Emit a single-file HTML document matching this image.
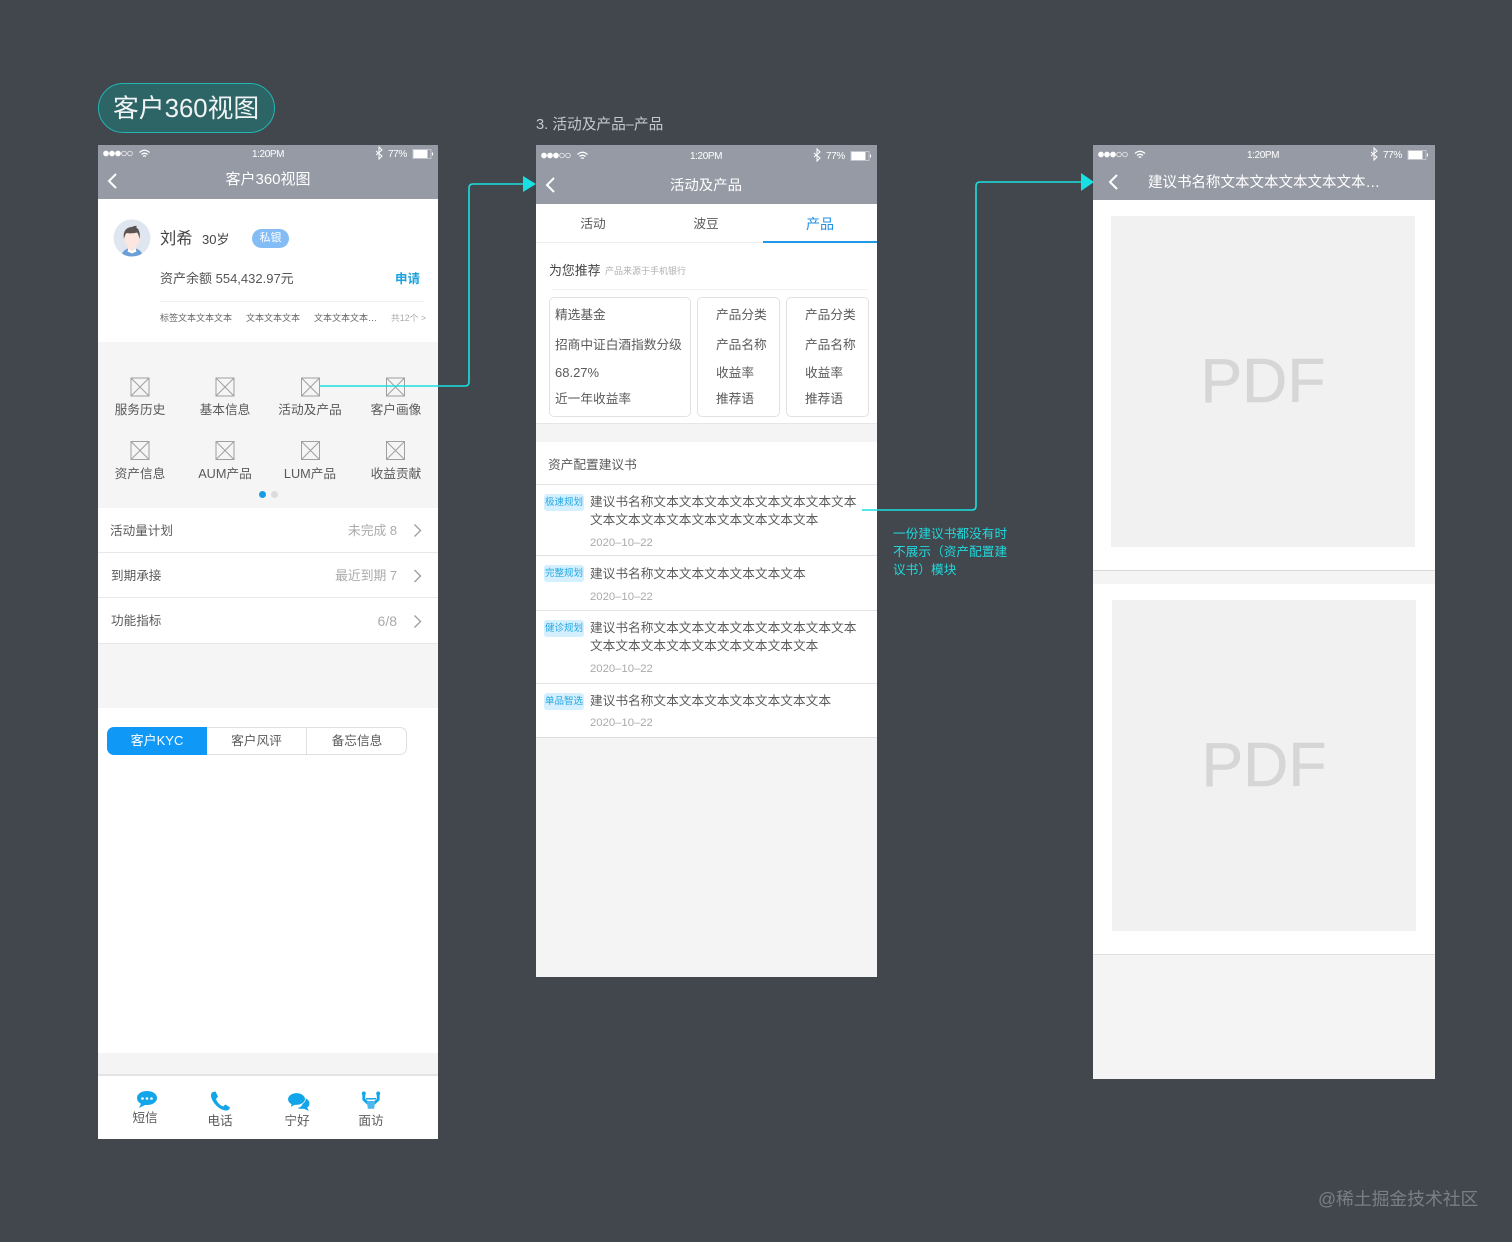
<!DOCTYPE html>
<html lang="zh"><head><meta charset="utf-8"><title>客户360视图</title>
<style>
html,body{margin:0;padding:0}
body{width:1512px;height:1242px;background:#42474d;position:relative;overflow:hidden;font-family:"Liberation Sans","Noto Sans CJK SC",sans-serif;color:#5a5a5a}
.b{position:absolute}
.t{position:absolute;white-space:nowrap;line-height:20px;height:20px;margin-top:1px}
.c{transform:translateX(-50%)}
.r{transform:translateX(-100%)}
.w{color:#fff}
.f12{font-size:12px}.f13{font-size:12.700px}.f14{font-size:14px}.f15{font-size:15px}.f10{font-size:10px}
.g{color:#aaa}
.tag{position:absolute;left:544px;width:40px;height:17px;line-height:17px;background:#d4effd;border-radius:3px;color:#25a7e4;font-size:9.500px;text-align:center;white-space:nowrap;margin-top:1px}
.card{position:absolute;top:297px;height:120px;border:1px solid #e2e2e2;border-radius:5px;box-sizing:border-box;background:#fff}
svg{position:absolute;overflow:visible}
</style></head><body>

<!-- Title pill -->
<div class="b" style="left:98px;top:83px;width:177px;height:50px;box-sizing:border-box;border:1.500px solid #22b6b2;border-radius:25px;background:#2d6466"></div>
<div class="t w" style="left:113px;top:93px;font-size:25.800px;line-height:30px;height:30px;color:#f0f4f4">客户360视图</div>
<div class="t" style="left:536px;top:114px;font-size:14.700px;color:#c6c9cc">3. 活动及产品–产品</div>

<!-- Phone 1 -->
<div class="b" style="left:98px;top:145px;width:340px;height:994px;background:#fff"></div>
<div class="b" style="left:98px;top:145px;width:340px;height:54px;background:#969aa5"></div>
<div class="b" style="left:98px;top:342px;width:340px;height:166px;background:#f5f5f6"></div>
<div class="b" style="left:98px;top:552px;width:340px;height:1px;background:#e8e8e8"></div>
<div class="b" style="left:98px;top:597px;width:340px;height:1px;background:#e8e8e8"></div>
<div class="b" style="left:98px;top:643px;width:340px;height:65px;background:#f5f5f6;border-top:1px solid #e6e6e6;box-sizing:border-box"></div>
<div class="b" style="left:98px;top:1053px;width:340px;height:23px;background:#f4f4f5;border-bottom:2px solid #e4e4e6;box-sizing:border-box"></div>
<div class="b" style="left:160px;top:301px;width:264px;height:1px;background:#f0f0f0"></div>

<div class="t w f10" style="left:252px;top:144px;letter-spacing:-.4px">1:20PM</div>
<div class="t w f10" style="left:388px;top:144px;letter-spacing:-.4px">77%</div>
<div class="t w c f15" style="left:268px;top:169px">客户360视图</div>

<!-- avatar -->
<svg style="left:113px;top:219px" width="38" height="38" viewBox="0 0 38 38">
<defs><clipPath id="av"><circle cx="19" cy="19" r="18.500"/></clipPath></defs>
<circle cx="19" cy="19" r="18.500" fill="#dfe6f0"/>
<g clip-path="url(#av)">
<path d="M8 38c1-6 5-9 11-9s10 3 11 9z" fill="#6a9fd6"/>
<path d="M15 27h8v3l-4 3-4-3z" fill="#fbe6de"/>
<path d="M15.500 29.500l3.500 3 3.500-3 1 3-4.500 2-4.500-2z" fill="#fff"/>
<ellipse cx="19" cy="20" rx="7.500" ry="8.500" fill="#fce6de"/>
<path d="M11 20c-1.500-7.500 2.500-12 8-12 1.500-1 3.500-1.200 5-1-.5.500-.8 1-.8 1.500 3 1.500 4.300 6 3.300 11.500-.5-3-1.500-5.500-2.500-6.500-3 1-8 1-10.500.500-1 1-2 3.500-2.500 6z" fill="#5a5554"/>
</g></svg>
<div class="t" style="left:160px;top:228px;font-size:16.300px;color:#444">刘希</div>
<div class="t" style="left:202px;top:229px;font-size:13px;color:#444">30岁</div>
<div class="b w" style="left:252px;top:229px;width:37px;height:19px;line-height:19px;border-radius:10px;background:#84bdf5;text-align:center;font-size:11px">私银</div>
<div class="t f13" style="left:160px;top:268px;font-size:13px;color:#555">资产余额 554,432.97元</div>
<div class="t" style="left:395px;top:268px;color:#1ea3de;font-weight:bold;font-size:12.500px">申请</div>
<div class="t" style="left:160px;top:307px;font-size:9px;color:#666">标签文本文本文本</div>
<div class="t" style="left:246px;top:307px;font-size:9px;color:#666">文本文本文本</div>
<div class="t" style="left:314px;top:307px;font-size:9px;color:#666">文本文本文本…</div>
<div class="t" style="left:391px;top:307px;font-size:8.800px;color:#aaa">共12个 &gt;</div>

<!-- icon grid -->
<svg style="left:0;top:0" width="1512" height="1242" fill="none" stroke="#a0a0a0" stroke-width="1">
<g>
<path d="M131 378h18v18h-18zM131 378l18 18M149 378l-18 18"/>
<path d="M216 378h18v18h-18zM216 378l18 18M234 378l-18 18"/>
<path d="M301.500 378h18v18h-18zM301.500 378l18 18M319.500 378l-18 18"/>
<path d="M386.500 378h18v18h-18zM386.500 378l18 18M404.500 378l-18 18"/>
<path d="M131 441.500h18v18h-18zM131 441.500l18 18M149 441.500l-18 18"/>
<path d="M216 441.500h18v18h-18zM216 441.500l18 18M234 441.500l-18 18"/>
<path d="M301.500 441.500h18v18h-18zM301.500 441.500l18 18M319.500 441.500l-18 18"/>
<path d="M386.500 441.500h18v18h-18zM386.500 441.500l18 18M404.500 441.500l-18 18"/>
</g>
<!-- row chevrons -->
<path d="M414.500 524.500l6 6-6 6M414.500 570l6 6-6 6M414.500 615.500l6 6-6 6" stroke="#a0a0a0" stroke-width="1.400"/>
<!-- back arrows -->
<path d="M116 174l-7 7 7 7" stroke="#fff" stroke-width="2"/>
<path d="M554 178l-7 7 7 7" stroke="#fff" stroke-width="2"/>
<path d="M1117 175l-7 7 7 7" stroke="#fff" stroke-width="2"/>
<!-- connectors -->
<path d="M319 386H465q4 0 4-4V188q0-4 4-4H525" stroke="#19e0e2" stroke-width="1.600"/>
<path d="M862 510H972q4 0 4-4V186q0-4 4-4H1082" stroke="#19e0e2" stroke-width="1.600"/>
<path d="M523 176l13 8-13 8zM1081 173l13 9-13 9z" fill="#19e0e2" stroke="none"/>

<!-- status bars -->
<g stroke="#fff" stroke-width=".7">
<circle cx="106" cy="153.500" r="2.500" fill="#fff"/><circle cx="112" cy="153.500" r="2.500" fill="#fff"/><circle cx="118" cy="153.500" r="2.500" fill="#fff"/><circle cx="124" cy="153.500" r="2.300"/><circle cx="130" cy="153.500" r="2.300"/>
<path d="M139.500 152.500q5-4.500 10 0M141.500 154.500q3-2.700 6 0M143.200 156.500q1.300-1.300 2.600 0" stroke-width="1.300"/>
<path d="M376 151l6 5-3 3v-12l3 3-6 5" stroke-width="1"/>
<rect x="413" y="149.500" width="18" height="9" stroke-opacity=".6"/><rect x="413.500" y="150" width="14" height="8" fill="#fff" stroke="none"/><path d="M432.500 152.500v3" stroke-width="1"/>
</g>
<g stroke="#fff" stroke-width=".7">
<circle cx="544" cy="155.500" r="2.500" fill="#fff"/><circle cx="550" cy="155.500" r="2.500" fill="#fff"/><circle cx="556" cy="155.500" r="2.500" fill="#fff"/><circle cx="562" cy="155.500" r="2.300"/><circle cx="568" cy="155.500" r="2.300"/>
<path d="M577.500 154.500q5-4.500 10 0M579.500 156.500q3-2.700 6 0M581.200 158.500q1.300-1.300 2.600 0" stroke-width="1.300"/>
<path d="M814 153l6 5-3 3v-12l3 3-6 5" stroke-width="1"/>
<rect x="851" y="151.500" width="18" height="9" stroke-opacity=".6"/><rect x="851.500" y="152" width="14" height="8" fill="#fff" stroke="none"/><path d="M870.500 154.500v3" stroke-width="1"/>
</g>
<g stroke="#fff" stroke-width=".7">
<circle cx="1101" cy="154.500" r="2.500" fill="#fff"/><circle cx="1107" cy="154.500" r="2.500" fill="#fff"/><circle cx="1113" cy="154.500" r="2.500" fill="#fff"/><circle cx="1119" cy="154.500" r="2.300"/><circle cx="1125" cy="154.500" r="2.300"/>
<path d="M1135 153.500q5-4.500 10 0M1137 155.500q3-2.700 6 0M1138.700 157.500q1.300-1.300 2.600 0" stroke-width="1.300"/>
<path d="M1371 152l6 5-3 3v-12l3 3-6 5" stroke-width="1"/>
<rect x="1408" y="150.500" width="18" height="9" stroke-opacity=".6"/><rect x="1408.500" y="151" width="14" height="8" fill="#fff" stroke="none"/><path d="M1427.500 153.500v3" stroke-width="1"/>
</g>
</svg>

<div class="t c f13" style="left:140px;top:399px">服务历史</div>
<div class="t c f13" style="left:225px;top:399px">基本信息</div>
<div class="t c f13" style="left:310px;top:399px">活动及产品</div>
<div class="t c f13" style="left:396px;top:399px">客户画像</div>
<div class="t c f13" style="left:140px;top:463px">资产信息</div>
<div class="t c f13" style="left:225px;top:463px">AUM产品</div>
<div class="t c f13" style="left:310px;top:463px">LUM产品</div>
<div class="t c f13" style="left:396px;top:463px">收益贡献</div>
<div class="b" style="left:259px;top:491px;width:7px;height:7px;border-radius:50%;background:#1a9be6"></div>
<div class="b" style="left:271px;top:491px;width:7px;height:7px;border-radius:50%;background:#dcdcdc"></div>

<div class="t" style="left:110px;top:520px;font-size:12.600px">活动量计划</div>
<div class="t f13 g r" style="left:397px;top:520px;font-size:12.800px">未完成 8</div>
<div class="t" style="left:111px;top:565px;font-size:12.600px">到期承接</div>
<div class="t f13 g r" style="left:397px;top:565px;font-size:12.800px">最近到期 7</div>
<div class="t" style="left:111px;top:610px;font-size:12.600px">功能指标</div>
<div class="t g r" style="left:397px;top:610px;font-size:14px">6/8</div>

<!-- segment -->
<div class="b" style="left:107px;top:727px;width:300px;height:28px;box-sizing:border-box;border:1px solid #dfdfdf;border-radius:7px"></div>
<div class="b w" style="left:107px;top:727px;width:100px;height:28px;line-height:28px;font-size:13px;box-sizing:border-box;background:#0f98f5;border-radius:7px 0 0 7px;text-align:center">客户KYC</div>
<div class="b f13" style="left:207px;top:728px;width:100px;height:27px;line-height:27px;text-align:center;box-sizing:border-box;border-right:1.500px solid #dfdfdf">客户风评</div>
<div class="b f13" style="left:307px;top:728px;width:100px;height:27px;line-height:27px;text-align:center">备忘信息</div>

<!-- bottom tabs -->
<svg style="left:0;top:0" width="1512" height="1242">
<g fill="#12a5ea">
<path d="M147 1091c-5.700 0-10 3-10 7 0 2.500 1.600 4.500 4 5.700l-2 4.300 6-3h2c5.700 0 10-3 10-7s-4.300-7-10-7z"/>
<path d="M213 1092l2.500-.5 2.500 5-2 2.500c1 3 3.500 6 7 7.500l2.500-2 4.500 3c-.5 2-2 3-4 3-7 -.5-14-8-15-14.500-.2-2 .5-3.500 2-4z"/>
<path d="M301 1097.500c4.500 0 8.500 2.300 8.500 6 0 1.800-1 3.100-2.300 4.100l1.800 3.400-5-2.300c-2.200.3-4.700.2-6.500-.7 4.500-1 7-4 3.500-10.500z"/>
<path d="M296.500 1092.800c-4.900 0-8.800 2.900-8.800 6.500 0 2.200 1.400 4 3.500 5.100l-.8 3.300 4.100-2.500h2c4.900 0 8.800-2.900 8.800-6.200s-3.900-6.200-8.800-6.200z" stroke="#fff" stroke-width=".7"/>
</g>
<g fill="none" stroke="#12a5ea" stroke-width="2.800">
<path d="M363.800 1093v6.500l4.700 4.300"/>
<path d="M378.200 1093v6.500l-4.700 4.300"/>
</g>
<g fill="#12a5ea">
<circle cx="363.800" cy="1093.500" r="2"/><circle cx="378.200" cy="1093.500" r="2"/>
<path d="M366 1098h10v1.500h-10z"/>
<path d="M367 1101h8l-.8 7.800h-6.400z" fill="#4db8ee"/>
</g>
<g fill="#fff"><circle cx="142.500" cy="1098.500" r="1.300"/><circle cx="147" cy="1098.500" r="1.300"/><circle cx="151.500" cy="1098.500" r="1.300"/></g>
</svg>
<div class="t c f13" style="left:145px;top:1107px">短信</div>
<div class="t c f13" style="left:220px;top:1110px">电话</div>
<div class="t c f13" style="left:297px;top:1110px">宁好</div>
<div class="t c f13" style="left:371px;top:1110px">面访</div>

<!-- Phone 2 -->
<div class="b" style="left:536px;top:145px;width:341px;height:832px;background:#f4f4f5;z-index:-1"></div>
<div class="b" style="left:536px;top:145px;width:341px;height:59px;background:#969aa5;z-index:-1"></div>
<div class="b" style="left:536px;top:204px;width:341px;height:220px;background:#fff;border-bottom:1px solid #e6e6e6;box-sizing:border-box;z-index:-1"></div>
<div class="b" style="left:536px;top:442px;width:341px;height:296px;background:#fff;border-bottom:1px solid #dedede;box-sizing:border-box;z-index:-1"></div>
<div class="b" style="left:536px;top:242px;width:341px;height:1px;background:#eee"></div>
<div class="b" style="left:763px;top:241px;width:114px;height:2px;background:#2498e8"></div>
<div class="b" style="left:552px;top:289px;width:316px;height:1px;background:#f3f3f3"></div>
<div class="t w f10" style="left:690px;top:146px;letter-spacing:-.4px">1:20PM</div>
<div class="t w f10" style="left:826px;top:146px;letter-spacing:-.4px">77%</div>
<div class="t w c f14" style="left:706px;top:175px;font-size:14.400px">活动及产品</div>
<div class="t c f13" style="left:593px;top:213px">活动</div>
<div class="t c f13" style="left:706px;top:213px">波豆</div>
<div class="t c" style="left:820px;top:213px;font-size:14px;color:#1d90e2">产品</div>
<div class="t" style="left:549px;top:260px;font-size:12.900px;color:#444">为您推荐</div>
<div class="t" style="left:605px;top:260px;font-size:9px;color:#b0b0b0">产品来源于手机银行</div>

<div class="card" style="left:549px;width:142px"></div>
<div class="card" style="left:697px;width:83px"></div>
<div class="card" style="left:786px;width:83px"></div>
<div class="t f13" style="left:555px;top:304px">精选基金</div>
<div class="t f13" style="left:555px;top:334px">招商中证白酒指数分级</div>
<div class="t" style="left:555px;top:362px;font-size:13px">68.27%</div>
<div class="t f13" style="left:555px;top:388px">近一年收益率</div>
<div class="t f13" style="left:716px;top:304px">产品分类</div>
<div class="t f13" style="left:716px;top:334px">产品名称</div>
<div class="t f13" style="left:716px;top:362px">收益率</div>
<div class="t f13" style="left:716px;top:388px">推荐语</div>
<div class="t f13" style="left:805px;top:304px">产品分类</div>
<div class="t f13" style="left:805px;top:334px">产品名称</div>
<div class="t f13" style="left:805px;top:362px">收益率</div>
<div class="t f13" style="left:805px;top:388px">推荐语</div>

<div class="t f13" style="left:548px;top:454px">资产配置建议书</div>
<div class="b" style="left:536px;top:484px;width:341px;height:1px;background:#e4e4e4"></div>
<div class="b" style="left:536px;top:555px;width:341px;height:1px;background:#e0e0e0"></div>
<div class="b" style="left:536px;top:610px;width:341px;height:1px;background:#e4e4e4"></div>
<div class="b" style="left:536px;top:683px;width:341px;height:1px;background:#e4e4e4"></div>

<div class="tag" style="top:493px">极速规划</div>
<div class="t f13" style="left:590px;top:491px">建议书名称文本文本文本文本文本文本文本文本</div>
<div class="t f13" style="left:590px;top:509px">文本文本文本文本文本文本文本文本文本</div>
<div class="t g" style="left:590px;top:532px;font-size:11.300px">2020–10–22</div>
<div class="tag" style="top:564px">完整规划</div>
<div class="t f13" style="left:590px;top:563px">建议书名称文本文本文本文本文本文本</div>
<div class="t g" style="left:590px;top:586px;font-size:11.300px">2020–10–22</div>
<div class="tag" style="top:619px">健诊规划</div>
<div class="t f13" style="left:590px;top:617px">建议书名称文本文本文本文本文本文本文本文本</div>
<div class="t f13" style="left:590px;top:635px">文本文本文本文本文本文本文本文本文本</div>
<div class="t g" style="left:590px;top:658px;font-size:11.300px">2020–10–22</div>
<div class="tag" style="top:692px">单品智选</div>
<div class="t f13" style="left:590px;top:690px">建议书名称文本文本文本文本文本文本文本</div>
<div class="t g" style="left:590px;top:712px;font-size:11.300px">2020–10–22</div>

<div class="t f13" style="left:893px;top:523px;color:#1fd8dc">一份建议书都没有时</div>
<div class="t f13" style="left:893px;top:541px;color:#1fd8dc">不展示（资产配置建</div>
<div class="t f13" style="left:893px;top:559px;color:#1fd8dc">议书）模块</div>

<!-- Phone 3 -->
<div class="b" style="left:1093px;top:145px;width:342px;height:934px;background:#f4f4f5;z-index:-1"></div>
<div class="b" style="left:1093px;top:145px;width:342px;height:55px;background:#969aa5;z-index:-1"></div>
<div class="b" style="left:1093px;top:200px;width:342px;height:371px;background:#fff;border-bottom:1px solid #d8d8d8;box-sizing:border-box;z-index:-1"></div>
<div class="b" style="left:1093px;top:584px;width:342px;height:371px;background:#fff;border-bottom:1px solid #e0e0e0;box-sizing:border-box;z-index:-1"></div>
<div class="b" style="left:1111px;top:216px;width:304px;height:331px;background:#f1f1f1"></div>
<div class="b" style="left:1112px;top:600px;width:304px;height:331px;background:#f1f1f1"></div>
<div class="t c" style="left:1263px;top:345px;font-size:62.500px;line-height:70px;height:70px;color:#d6d6d6;-webkit-text-stroke:.5px #d6d6d6">PDF</div>
<div class="t c" style="left:1264px;top:729px;font-size:62.500px;line-height:70px;height:70px;color:#d6d6d6;-webkit-text-stroke:.5px #d6d6d6">PDF</div>
<div class="t w f10" style="left:1247px;top:145px;letter-spacing:-.4px">1:20PM</div>
<div class="t w f10" style="left:1383px;top:145px;letter-spacing:-.4px">77%</div>
<div class="t w" style="left:1148px;top:172px;font-size:14.500px">建议书名称文本文本文本文本文本…</div>

<div class="t" style="left:1318px;top:1188px;font-size:17.800px;color:#7b7f84">@稀土掘金技术社区</div>
</body></html>
